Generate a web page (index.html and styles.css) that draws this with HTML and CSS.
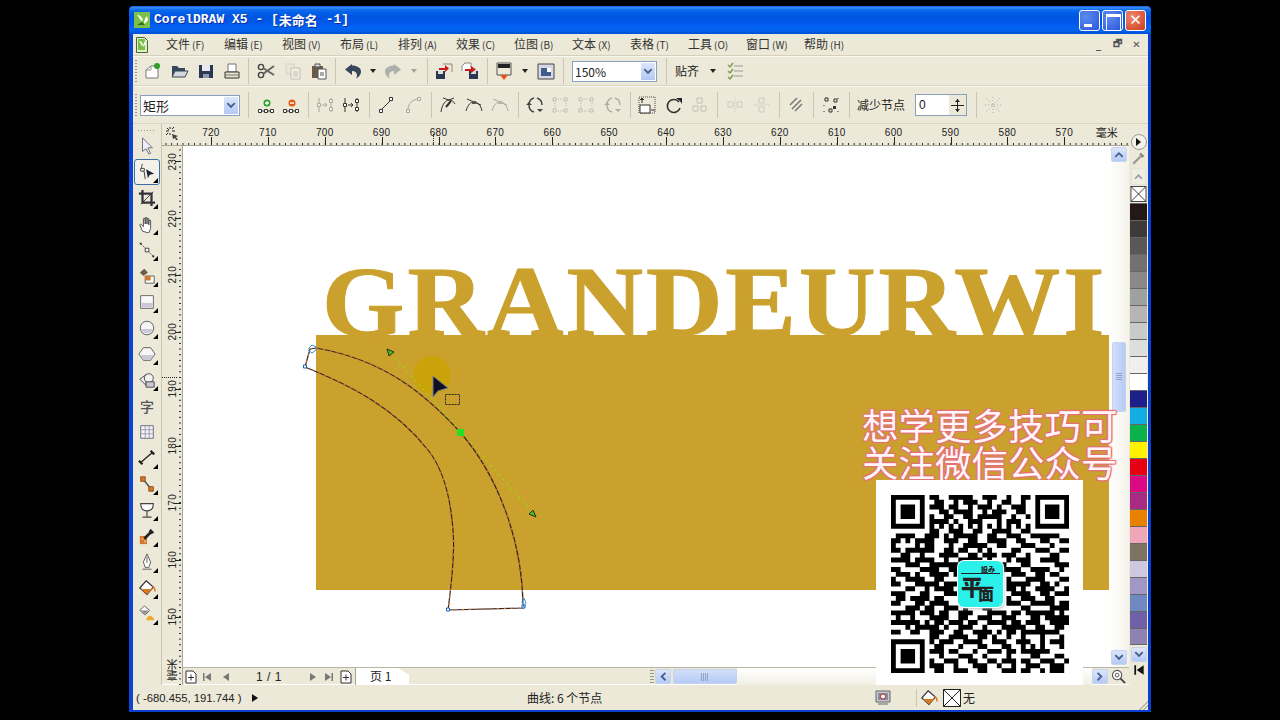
FILE: index.html
```html
<!DOCTYPE html>
<html lang="zh">
<head>
<meta charset="utf-8">
<title>CorelDRAW X5</title>
<link rel="stylesheet" href="styles.css">
</head>
<body>
<svg class="sprite">
<symbol id="logo" viewBox="0 0 16 16"><path d="M0 0h16v16H0z" fill="#7cc04a"/><path d="M3 3c3 0 5 2 6 5l-2 1C6 7 5 5 3 3zM13 4c-2 2-3 5-3 8 2-1 3-3 4-4z" fill="#fff"/><path d="M3 13l5-3 3 3z" fill="#2f6b1e"/></symbol>
<symbol id="doc" viewBox="0 0 12 16"><path d="M.5.500h8l3 3v12H.5z" fill="#dff0c8" stroke="#4a6a30"/><path d="M2 2h7v11H2z" fill="#7cc04a"/><path d="M3 4c2 0 3 1 4 4l-1 1C5 7 4 5 3 4zM9 4C8 6 7 8 7 10c1-1 2-2 2-3z" fill="#fff"/></symbol>
<symbol id="corner" viewBox="0 0 15 15"><path d="M2 5h3M8 5h3M6 1v2M6 7v2M2 9l2-2M8 3l2-2M3 2l2 2" stroke="#222" stroke-width="1"/><path d="M8 8l6 2-2 1 2 3-2 0-1-2-2 1z" fill="#444"/></symbol>
<symbol id="spinb" viewBox="0 0 17 20"><path d="M2 10.500h13M8.500 4v13" stroke="#222"/><path d="M6 7h5L8.500 4zM6 14h5l-2.500 3z" fill="#222"/></symbol>
<symbol id="new" viewBox="0 0 20 20"><path d="M4 17V9l5-4h7v12z" fill="#fff" stroke="#777"/><path d="M4 9h5V5" fill="none" stroke="#999"/><circle cx="15" cy="5" r="3" fill="#2b9e2b"/></symbol>
<symbol id="open" viewBox="0 0 20 20"><path d="M3 16V5h5l2 2h6v3H7l-4 6z" fill="#38465a"/><path d="M3 16l3-6h13l-3 6z" fill="#d3d6da" stroke="#38465a"/></symbol>
<symbol id="save" viewBox="0 0 20 20"><path d="M3 4h14v13H3z" fill="#2c3852"/><path d="M6 4h8v6H6z" fill="#e8e8f0"/><path d="M7 13h6v4H7z" fill="#8f9ab5"/></symbol>
<symbol id="print" viewBox="0 0 20 20"><path d="M6 3h8v8H6z" fill="#fff" stroke="#777"/><path d="M3 11h14v6H3z" fill="#e9e4cc" stroke="#333"/><path d="M3 14h14" stroke="#777"/></symbol>
<symbol id="cut" viewBox="0 0 20 20"><circle cx="5" cy="6" r="2.6" fill="none" stroke="#444" stroke-width="1.4"/><circle cx="5" cy="14" r="2.6" fill="none" stroke="#444" stroke-width="1.4"/><path d="M7 7l11 7M7 13l11-8" stroke="#666" stroke-width="2"/></symbol>
<symbol id="copy" viewBox="0 0 20 20"><path d="M3 3h8v10H3z" fill="#e4e4dc" stroke="#aaa"/><path d="M8 7h9v11H8z" fill="#fff" stroke="#777"/><path d="M10 11h5M10 13h5M10 15h5" stroke="#777"/></symbol>
<symbol id="paste" viewBox="0 0 20 20"><path d="M3 5h11v12H3z" fill="#6b5a45"/><path d="M6 3h5v3H6z" fill="#ddd" stroke="#555"/><path d="M9 8h8v10H9z" fill="#fff" stroke="#555"/><path d="M11 12h4M11 14h4" stroke="#555"/></symbol>
<symbol id="undo" viewBox="0 0 20 20"><path d="M9 3L2 8.500l7 5.500v-4c3 0 5 1.500 5 4.500 0 1-.5 2-1 3 3-1.500 5-4 5-7 0-3.500-4-6-9-6z" fill="#38465a"/></symbol>
<symbol id="imp" viewBox="0 0 20 20"><path d="M2 10h9v8H2z" fill="#2c3852"/><path d="M4 10h5v3H4z" fill="#ddd"/><path d="M9 3h9v8" fill="none" stroke="#888"/><path d="M7 9h6V6l4 3.500-4 3.500v-2H7z" fill="#d01818" transform="translate(-2 -2)"/></symbol>
<symbol id="exp" viewBox="0 0 20 20"><path d="M9 10h9v8H9z" fill="#2c3852"/><path d="M11 10h5v3h-5z" fill="#ddd"/><path d="M2 10V5l3-3h6v5" fill="#fff" stroke="#888"/><path d="M5 8h6V5l5 3.500-5 3.500v-2H5z" fill="#d01818"/></symbol>
<symbol id="pub" viewBox="0 0 20 20"><path d="M3 2h14v12H3z" fill="#ece9d8" stroke="#555"/><path d="M4 3h12v4H4z" fill="#222"/><path d="M6 14h8l-4 5z" fill="#e8501a"/></symbol>
<symbol id="launch" viewBox="0 0 20 20"><path d="M2 3h16v15H2z" fill="#d8d8e4" stroke="#444"/><path d="M5 7h10v8H5z" fill="#3f5c8c"/><path d="M11 7h4v4h-4z" fill="#fff"/></symbol>
<symbol id="snap" viewBox="0 0 20 20"><path d="M3 4l2 2 3-4M3 10l2 2 3-4M3 16l2 2 3-4" fill="none" stroke="#7a9a50" stroke-width="1.400"/><path d="M9 5h9M9 10h9M9 15h9" stroke="#999"/></symbol>
<symbol id="nadd" viewBox="0 0 20 20"><path d="M2.500 14.500h3v3h-3zM8.500 14.500h3v3h-3zM14.500 14.500h3v3h-3z" fill="#fff" stroke="#333"/><path d="M5.500 16h3M11.500 16h3" stroke="#333"/><circle cx="11" cy="8" r="3.500" fill="#2aa02a"/><path d="M9 8h4M11 6v4" stroke="#fff" stroke-width="1.300"/></symbol>
<symbol id="ndel" viewBox="0 0 20 20"><path d="M2.500 14.500h3v3h-3zM8.500 14.500h3v3h-3zM14.500 14.500h3v3h-3z" fill="#fff" stroke="#333"/><path d="M5.500 16h3M11.500 16h3" stroke="#333"/><circle cx="11" cy="8" r="3.500" fill="#e05a10"/><path d="M9 8h4" stroke="#fff" stroke-width="1.400"/></symbol>
<symbol id="join" viewBox="0 0 20 20"><path d="M4 3v14M16 3v14" stroke="#333"/><path d="M2.500 8.500h3v3h-3z" fill="#fff" stroke="#333"/><path d="M14.500 4.500h3v3h-3zM14.500 12.500h3v3h-3z" fill="#fff" stroke="#333"/><path d="M7 10h5M10 8l2 2-2 2" fill="none" stroke="#333"/></symbol>
<symbol id="line" viewBox="0 0 20 20"><path d="M5 15L15 5" stroke="#333"/><path d="M3.500 14.500h3v3h-3zM13.500 2.500h3v3h-3z" fill="#fff" stroke="#333"/></symbol>
<symbol id="curve" viewBox="0 0 20 20"><path d="M5 15C5 8 9 5 15 4" fill="none" stroke="#333"/><path d="M3.500 14.500h3v3h-3zM14.500 2.500h3v3h-3z" fill="#fff" stroke="#333"/></symbol>
<symbol id="cusp" viewBox="0 0 20 20"><path d="M3 17C4 9 8 5 11 5c3 0 5 2 6 4M11 5L5 3M11 5l5-2" fill="none" stroke="#333"/><path d="M8 12l5-6" stroke="#333" stroke-width="2"/></symbol>
<symbol id="smooth" viewBox="0 0 20 20"><path d="M2 16C4 9 7 7 10 7s7 3 8 9M3 4l14 6" fill="none" stroke="#333"/><path d="M8 6h4v3H8z" fill="#555"/></symbol>
<symbol id="rev" viewBox="0 0 20 20"><path d="M9 3C5 4 4 8 4 10s1 6 5 7M12 3c3 1 5 4 5 7" fill="none" stroke="#444" stroke-width="1.500"/><path d="M1 10l3-3 3 3M8 10H3M12 14h6l-3 3z" fill="#444"/></symbol>
<symbol id="ext" viewBox="0 0 20 20"><path d="M3 3h3v3H3zM14 14h3v3h-3zM14 3h3v3h-3zM3 14h3v3H3z" fill="#fff" stroke="#666"/><path d="M5 8v5M8 16h5M8 4h4M16 8v4" stroke="#666" stroke-dasharray="1 1"/></symbol>
<symbol id="stretch" viewBox="0 0 20 20"><path d="M2 2h16v16H2z" fill="none" stroke="#444" stroke-dasharray="1 1"/><path d="M3 10h10v8H3z" fill="#fff" stroke="#333"/><path d="M5 3v5M3 5l2-2 2 2M14 15h4" stroke="#333"/></symbol>
<symbol id="rot" viewBox="0 0 20 20"><path d="M15 7a6.500 6.500 0 1 0 1 6" fill="none" stroke="#333" stroke-width="1.600"/><path d="M12 3h6v6l-2-3z" fill="#222"/></symbol>
<symbol id="aln" viewBox="0 0 20 20"><path d="M7 3h5v5H7zM3 11h5v5H3zM11 11h5v5h-5z" fill="none" stroke="#777"/></symbol>
<symbol id="mx" viewBox="0 0 20 20"><path d="M10 2v16" stroke="#888" stroke-dasharray="1 1"/><path d="M3 7h5v5H3zM12 7h5v5h-5z" fill="none" stroke="#999"/></symbol>
<symbol id="my" viewBox="0 0 20 20"><path d="M2 10h16" stroke="#888" stroke-dasharray="1 1"/><path d="M7 3h5v5H7zM7 12h5v5H7z" fill="none" stroke="#999"/></symbol>
<symbol id="ell" viewBox="0 0 20 20"><path d="M4 10L11 3M6 14l9-9M9 16l7-7" stroke="#777" stroke-width="1.500"/></symbol>
<symbol id="sel" viewBox="0 0 20 20"><path d="M4 3h3v3H4zM13 4h3v3h-3zM8 14h3v3H8z" fill="none" stroke="#333"/><path d="M12 11h3v3h-3z" fill="#333"/><path d="M3 10v1M3 16v1M17 3v1M17 16v1" stroke="#333"/></symbol>
<symbol id="grid" viewBox="0 0 20 20"><path d="M3 3l14 14M17 3L3 17M10 2v16M2 10h16" stroke="#aaa" stroke-dasharray="1 2"/></symbol>
<symbol id="pick" viewBox="0 0 20 20"><path d="M5 1v15l4-3 3 6 2-1-3-6h5z" fill="#eef" stroke="#667"/></symbol>
<symbol id="shape" viewBox="0 0 20 20"><path d="M5 1c-2 4-1 8 2 9l1 8" fill="none" stroke="#333"/><path d="M3 6h4v3H3z" fill="#fff" stroke="#333"/><path d="M9 7l9 5-5 1-2 4z" fill="#1a2438"/></symbol>
<symbol id="crop" viewBox="0 0 20 20"><path d="M5 1v14h14M1 5h14v14" fill="none" stroke="#33333a" stroke-width="2.500"/><path d="M3 17L17 3" stroke="#33333a"/></symbol>
<symbol id="hand" viewBox="0 0 20 20"><path d="M5 18L2 11l1-1 3 3V4h2v6-7h2v7-6h2v7-5h2v9l-2 5z" fill="#fff" stroke="#444"/></symbol>
<symbol id="conn" viewBox="0 0 20 20"><path d="M3 3l14 14" stroke="#444" stroke-dasharray="2 1"/><path d="M8 8h4v4H8z" fill="#fff" stroke="#333"/><path d="M2 2h2v2H2zM16 16h2v2h-2z" fill="#222"/></symbol>
<symbol id="sfill" viewBox="0 0 20 20"><path d="M2 6l5-4 4 4-5 4z" fill="#6d5e44"/><path d="M8 10h10v8H8z" fill="#fff" stroke="#555"/><path d="M8 10h6v5H8z" fill="#d07a2a"/></symbol>
<symbol id="rect" viewBox="0 0 20 20"><path d="M3 3h14v14H3z" fill="#fff" stroke="#555"/><path d="M4 4h12v7H4z" fill="#f8f8f8"/><path d="M4 11h12v5H4z" fill="#c9c9d6"/></symbol>
<symbol id="oval" viewBox="0 0 20 20"><circle cx="10" cy="10" r="7.500" fill="#f6f6f6" stroke="#555"/><path d="M3 11a7.500 7 0 0 0 14 0z" fill="#c9c9d6"/></symbol>
<symbol id="poly" viewBox="0 0 20 20"><path d="M6 3h8l5 7-5 7H6l-5-7z" fill="#f6f6f6" stroke="#555"/><path d="M2 11h16l-4 5.500H6z" fill="#c9c9d6"/></symbol>
<symbol id="basic" viewBox="0 0 20 20"><path d="M2 9l7-5v12z" fill="#eee" stroke="#444"/><circle cx="12" cy="8" r="5" fill="#f4f4f4" stroke="#444"/><path d="M9 12h9v6H9z" fill="#c9c9d6" stroke="#444"/></symbol>
<symbol id="table" viewBox="0 0 20 20"><path d="M3 3h14v14H3z" fill="#f2f2f8" stroke="#667"/><path d="M3 7.500h14M3 12h14M8 3v14M12.500 3v14" stroke="#99a"/></symbol>
<symbol id="dim" viewBox="0 0 20 20"><path d="M3 15L16 4" stroke="#222" stroke-width="1.500"/><path d="M1 13l4 4M14 2l4 4" stroke="#222" stroke-width="2.500"/></symbol>
<symbol id="wire" viewBox="0 0 20 20"><path d="M6 5l8 10" stroke="#444" stroke-width="1.400"/><path d="M3 2h5v5H3z" fill="#d6782a" stroke="#8a4a10"/><path d="M12 13h5v5h-5z" fill="#d6782a" stroke="#8a4a10"/></symbol>
<symbol id="glass" viewBox="0 0 20 20"><path d="M3 3h14c0 6-3 8-7 8s-7-2-7-8zM10 11v6M5 18h10" fill="#fff" stroke="#444" stroke-width="1.300"/></symbol>
<symbol id="drop" viewBox="0 0 20 20"><path d="M2 10h8v9H2z" fill="#d6782a"/><path d="M4 12h2v2H4zM7 15h2v2H7z" fill="#f0c090"/><path d="M7 13l8-8" stroke="#222" stroke-width="3"/><path d="M14 2l4 4-3 2-3-3z" fill="#222"/></symbol>
<symbol id="dropg" viewBox="0 0 20 20"><path d="M3 17l10-10" stroke="#999" stroke-width="3"/><path d="M13 2l5 5-3 2-4-4z" fill="#888"/></symbol>
<symbol id="pen" viewBox="0 0 20 20"><path d="M10 1l4 9-2 6H8l-2-6z" fill="#fff" stroke="#555"/><path d="M10 4v7M5 18h10" stroke="#555"/></symbol>
<symbol id="fill" viewBox="0 0 20 20"><path d="M9 2l8 7-7 8-8-7z" fill="#fff" stroke="#333" stroke-width="1.300"/><path d="M3 11h13l-6 6z" fill="#d87820"/><path d="M16 8c2 1 3 3 3 6" fill="none" stroke="#d87820" stroke-width="1.500"/></symbol>
<symbol id="ifill" viewBox="0 0 20 20"><path d="M7 1l6 5-5 5-6-5z" fill="#fff" stroke="#555"/><path d="M3 6h9l-4 4z" fill="#888"/><path d="M9 17c1-4 3-5 4-5s4 1 5 5z" fill="#f0a828"/></symbol>
<symbol id="up" viewBox="0 0 16 16"><path d="M3 10l5-5 5 5-1.500 1.500L8 8l-3.500 3.500z" fill="#4a5f8c"/></symbol>
<symbol id="down" viewBox="0 0 16 16"><path d="M3 6l5 5 5-5-1.500-1.500L8 8 4.500 4.500z" fill="#4a5f8c"/></symbol>
<symbol id="left" viewBox="0 0 16 16"><path d="M10 3L5 8l5 5 1.500-1.500L8 8l3.500-3.500z" fill="#4a5f8c"/></symbol>
<symbol id="right" viewBox="0 0 16 16"><path d="M6 3l5 5-5 5-1.500-1.500L8 8 4.500 4.500z" fill="#4a5f8c"/></symbol>
<symbol id="zoom" viewBox="0 0 16 16"><circle cx="6.500" cy="6.500" r="5" fill="#fff" stroke="#555" stroke-width="1.200"/><circle cx="6.500" cy="6.500" r="2" fill="none" stroke="#555"/><path d="M10 10l5 5" stroke="#444" stroke-width="2"/></symbol>
<symbol id="padd" viewBox="0 0 12 14"><path d="M1 1h7l3 3v9H1z" fill="#fff" stroke="#333"/><path d="M3 7.500h6M6 4.500v6" stroke="#333"/></symbol>
<symbol id="first" viewBox="0 0 12 12"><path d="M2 2h1.500v8H2zM10 2v8L4 6z" fill="#777"/></symbol>
<symbol id="firstd" viewBox="0 0 12 12"><path d="M2 2h1.500v8H2zM10 2v8L4 6z" fill="#111"/></symbol>
<symbol id="prev" viewBox="0 0 12 12"><path d="M9 2v8L3 6z" fill="#777"/></symbol>
<symbol id="next" viewBox="0 0 12 12"><path d="M3 2v8l6-4z" fill="#777"/></symbol>
<symbol id="last" viewBox="0 0 12 12"><path d="M8.500 2H10v8H8.500zM2 2v8l6-4z" fill="#777"/></symbol>
<symbol id="nofill" viewBox="0 0 18 18"><path d="M.5.500h17v17H.5z" fill="#fff" stroke="#222"/><path d="M.5.500l17 17M17.500.500l-17 17" stroke="#222"/></symbol>
<symbol id="colorp" viewBox="0 0 16 16"><path d="M1 1h14v11H1z" fill="#c8c8d4" stroke="#666"/><path d="M3 3h10v7H3z" fill="#8a8a9c"/><circle cx="8" cy="6.500" r="2.500" fill="#fff" stroke="#a33"/><path d="M3 14h10" stroke="#666"/></symbol>
</svg>

<div class="window">
  <header class="titlebar">
    <svg class="app-ic"><use href="#logo"/></svg>
    <span class="title"><span class="latin">CorelDRAW X5 - [</span><span>未命名</span><span class="latin"> -1]</span></span>
    <span class="caps"><span class="cap min"></span><span class="cap max"></span><span class="cap close"></span></span>
  </header>

  <nav class="menubar">
    <svg class="doc-ic"><use href="#doc"/></svg>
    <span class="mi">文件<small>(F)</small></span><span class="mi">编辑<small>(E)</small></span><span class="mi">视图<small>(V)</small></span><span class="mi">布局<small>(L)</small></span><span class="mi">排列<small>(A)</small></span><span class="mi">效果<small>(C)</small></span><span class="mi">位图<small>(B)</small></span><span class="mi">文本<small>(X)</small></span><span class="mi">表格<small>(T)</small></span><span class="mi">工具<small>(O)</small></span><span class="mi">窗口<small>(W)</small></span><span class="mi">帮助<small>(H)</small></span>
    <span class="mdi"><span class="mdi-b">_</span><span class="mdi-b">🗗</span><span class="mdi-b">✕</span></span>
  </nav>

  <div class="tb tb1">
    <span class="grip"></span>
    <span class="c w27"><svg class="ic"><use href="#new"/></svg></span>
    <span class="c w27"><svg class="ic"><use href="#open"/></svg></span>
    <span class="c w27"><svg class="ic"><use href="#save"/></svg></span>
    <span class="c w25"><svg class="ic"><use href="#print"/></svg></span>
    <span class="s w8"></span>
    <span class="c w27"><svg class="ic"><use href="#cut"/></svg></span>
    <span class="c w27 off"><svg class="ic"><use href="#copy"/></svg></span>
    <span class="c w25"><svg class="ic"><use href="#paste"/></svg></span>
    <span class="s w8"></span>
    <span class="c w27"><svg class="ic"><use href="#undo"/></svg></span>
    <span class="c w14"><i class="dd"></i></span>
    <span class="c w26 off"><svg class="ic flip"><use href="#undo"/></svg></span>
    <span class="c w16 off"><i class="dd"></i></span>
    <span class="s w9"></span>
    <span class="c w25"><svg class="ic"><use href="#imp"/></svg></span>
    <span class="c w27"><svg class="ic"><use href="#exp"/></svg></span>
    <span class="s w8"></span>
    <span class="c w26"><svg class="ic"><use href="#pub"/></svg></span>
    <span class="c w16"><i class="dd"></i></span>
    <span class="c w25"><svg class="ic"><use href="#launch"/></svg></span>
    <span class="s w10"></span>
    <span class="combo zoomcombo"><span class="combo-t">150%</span><span class="combo-b"><svg class="chev"><use href="#down"/></svg></span></span>
    <span class="s w18"></span>
    <span class="lbl snap-l">贴齐</span>
    <span class="c w24"><i class="dd"></i></span>
    <span class="c w20"><svg class="ic"><use href="#snap"/></svg></span>
  </div>

  <div class="tb tb2">
    <span class="grip"></span>
    <span class="combo shapecombo"><span class="combo-t">矩形</span><span class="combo-b"><svg class="chev"><use href="#down"/></svg></span></span>
    <span class="s w16"></span>
    <span class="c w20"><svg class="ic"><use href="#nadd"/></svg></span>
    <span class="c w30"><svg class="ic"><use href="#ndel"/></svg></span>
    <span class="s w4"></span>
    <span class="c w30 off"><svg class="ic"><use href="#join"/></svg></span>
    <span class="c w22"><svg class="ic"><use href="#join"/></svg></span>
    <span class="s w14"></span>
    <span class="c w20"><svg class="ic"><use href="#line"/></svg></span>
    <span class="c w34 off"><svg class="ic"><use href="#curve"/></svg></span>
    <span class="s w2"></span>
    <span class="c w32"><svg class="ic"><use href="#cusp"/></svg></span>
    <span class="c w20"><svg class="ic"><use href="#smooth"/></svg></span>
    <span class="c w32 off"><svg class="ic"><use href="#smooth"/></svg></span>
    <span class="s w4"></span>
    <span class="c w30"><svg class="ic"><use href="#rev"/></svg></span>
    <span class="c w20 off"><svg class="ic"><use href="#ext"/></svg></span>
    <span class="c w32 off"><svg class="ic"><use href="#ext"/></svg></span>
    <span class="c w22 off"><svg class="ic"><use href="#rev"/></svg></span>
    <span class="s w12"></span>
    <span class="c w22"><svg class="ic"><use href="#stretch"/></svg></span>
    <span class="c w32"><svg class="ic"><use href="#rot"/></svg></span>
    <span class="c w20 off"><svg class="ic"><use href="#aln"/></svg></span>
    <span class="s w14"></span>
    <span class="c w22 off"><svg class="ic"><use href="#mx"/></svg></span>
    <span class="c w32 off"><svg class="ic"><use href="#my"/></svg></span>
    <span class="s w2"></span>
    <span class="c w32"><svg class="ic"><use href="#ell"/></svg></span>
    <span class="s w2"></span>
    <span class="c w34"><svg class="ic"><use href="#sel"/></svg></span>
    <span class="s w2"></span>
    <span class="lbl reduce">减少节点</span>
    <span class="spin"><span class="spin-v">0</span><span class="spin-b"><svg class="spin-i"><use href="#spinb"/></svg></span></span>
    <span class="s w18"></span>
    <span class="c w16"><svg class="ic"><use href="#grid"/></svg></span>
  </div>

  <div class="workspace">
    <aside class="toolbox">
      <span class="t"><svg class="ic"><use href="#pick"/></svg></span>
      <span class="t tf active"><svg class="ic"><use href="#shape"/></svg></span>
      <span class="t tf"><svg class="ic"><use href="#crop"/></svg></span>
      <span class="t tf"><svg class="ic"><use href="#hand"/></svg></span>
      <span class="t tf"><svg class="ic"><use href="#conn"/></svg></span>
      <span class="t tf"><svg class="ic"><use href="#sfill"/></svg></span>
      <span class="t tf"><svg class="ic"><use href="#rect"/></svg></span>
      <span class="t tf"><svg class="ic"><use href="#oval"/></svg></span>
      <span class="t tf"><svg class="ic"><use href="#poly"/></svg></span>
      <span class="t tf"><svg class="ic"><use href="#basic"/></svg></span>
      <span class="t zi">字</span>
      <span class="t"><svg class="ic"><use href="#table"/></svg></span>
      <span class="t tf"><svg class="ic"><use href="#dim"/></svg></span>
      <span class="t tf"><svg class="ic"><use href="#wire"/></svg></span>
      <span class="t tf"><svg class="ic"><use href="#glass"/></svg></span>
      <span class="t tf"><svg class="ic"><use href="#drop"/></svg></span>
      <span class="t tf"><svg class="ic"><use href="#pen"/></svg></span>
      <span class="t tf"><svg class="ic"><use href="#fill"/></svg></span>
      <span class="t tf"><svg class="ic"><use href="#ifill"/></svg></span>
    </aside>

    <div class="center">
      <div class="hruler">
        <span class="rn">720</span><span class="rn">710</span><span class="rn">700</span><span class="rn">690</span><span class="rn">680</span><span class="rn">670</span><span class="rn">660</span><span class="rn">650</span><span class="rn">640</span><span class="rn">630</span><span class="rn">620</span><span class="rn">610</span><span class="rn">600</span><span class="rn">590</span><span class="rn">580</span><span class="rn">570</span>
        <span class="unit">毫米</span>
        <span class="corner"><svg class="corner-i"><use href="#corner"/></svg></span>
        <i class="hmark"></i>
      </div>
      <div class="vruler">
        <div class="vcol">
          <span class="vn"><b>230</b></span><span class="vn"><b>220</b></span><span class="vn"><b>210</b></span><span class="vn"><b>200</b></span><span class="vn"><b>190</b></span><span class="vn"><b>180</b></span><span class="vn"><b>170</b></span><span class="vn"><b>160</b></span><span class="vn"><b>150</b></span><span class="vn vu"><b>毫米</b></span>
        </div>
        <i class="vmark"></i>
      </div>

      <main class="canvas">
        <div class="goldrect"></div>
        <div class="goldtext">GRANDEURWI</div>
        <div class="halo"></div>
        <svg class="art" viewBox="183 146 926 521">
          <path class="ctrl" d="M391 353L535 515"/>
          <path class="shp" d="M316 348C385 360 425 394 460 432C500 478 523 545 523 608L448 610C452 580 455 550 453 530C450 490 440 465 428 450C395 408 350 385 305 367L310 349Z"/>
          <path class="shp2" d="M316 348C385 360 425 394 460 432C500 478 523 545 523 608L448 610C452 580 455 550 453 530C450 490 440 465 428 450C395 408 350 385 305 367L310 349Z"/>
          <path class="hnd" d="M387 349l7 3-5 4zM533 510l3 7-7-3z"/>
          <rect class="sqg" x="457" y="429" width="7" height="7"/>
          <path class="nod" d="M303.500 365h3v3h-3zM446.500 608h3v3h-3zM522 605h3v3h-3z"/>
          <path class="arrowh" d="M309 348l3-3 4 2 0 3-4 3-3-2zM522 602l2-4 2 5-2 4z"/>
          <path class="cursor" d="M433 376v21l5-6 10-3z"/>
          <rect class="mq" x="445.500" y="394.500" width="14" height="10"/>
        </svg>
      </main>

      <div class="vscroll">
        <span class="sb"><svg class="chev"><use href="#up"/></svg></span>
        <span class="vthumb"><i class="hatch"></i></span>
        <span class="sb"><svg class="chev"><use href="#down"/></svg></span>
      </div>

      <div class="pagebar">
        <span class="pg first"><svg class="pgi"><use href="#padd"/></svg></span>
        <span class="pg"><svg class="pgi"><use href="#first"/></svg></span>
        <span class="pg"><svg class="pgi"><use href="#prev"/></svg></span>
        <span class="pagenum">1 / 1</span>
        <span class="pg"><svg class="pgi"><use href="#next"/></svg></span>
        <span class="pg"><svg class="pgi"><use href="#last"/></svg></span>
        <span class="pg"><svg class="pgi"><use href="#padd"/></svg></span>
        <span class="tab">页 1</span>
        <span class="tabrest"></span>
        <span class="hgrip"></span>
        <span class="sb"><svg class="chev"><use href="#left"/></svg></span>
        <span class="hthumb"><i class="hatch h"></i></span>
        <span class="htrack"></span>
        <span class="sb"><svg class="chev"><use href="#right"/></svg></span>
        <span class="zm"><svg class="chev"><use href="#zoom"/></svg></span>
      </div>
    </div>

    <aside class="palette">
      <span class="pal-fly"><i></i></span>
      <span class="pal-drop"><svg class="chev"><use href="#dropg"/></svg></span>
      <span class="pal-up"><svg class="chev"><use href="#up"/></svg></span>
      <span class="sw-x"><svg class="swx"><use href="#nofill"/></svg></span>
      <span class="sw c01"></span><span class="sw c02"></span><span class="sw c03"></span><span class="sw c04"></span><span class="sw c05"></span><span class="sw c06"></span><span class="sw c07"></span><span class="sw c08"></span><span class="sw c09"></span><span class="sw c10"></span><span class="sw c11"></span><span class="sw c12"></span><span class="sw c13"></span><span class="sw c14"></span><span class="sw c15"></span><span class="sw c16"></span><span class="sw c17"></span><span class="sw c18"></span><span class="sw c19"></span><span class="sw c20"></span><span class="sw c21"></span><span class="sw c22"></span><span class="sw c23"></span><span class="sw c24"></span><span class="sw c25"></span><span class="sw c26"></span>
      <span class="sb pal-down"><svg class="chev"><use href="#down"/></svg></span>
      <span class="pal-end"><svg class="chev"><use href="#firstd"/></svg></span>
    </aside>
  </div>

  <footer class="status">
    <span class="coords">( -680.455, 191.744 )</span>
    <i class="tri"></i>
    <span class="nodes">曲线: 6 个节点</span>
    <svg class="st-ic"><use href="#colorp"/></svg>
    <i class="st-sep"></i>
    <svg class="st-fill"><use href="#fill"/></svg>
    <svg class="st-x"><use href="#nofill"/></svg>
    <span class="st-none">无</span>
    <i class="resize"></i>
  </footer>

  <div class="watermark">想学更多技巧可<br>关注微信公众号</div>
  <div class="qrpanel">
    <svg class="qr" viewBox="0 0 37 37">
      <path class="qf" fill-rule="evenodd" d="M0 0h7v7H0zM1 1v5h5V1zM2 2h3v3H2zM30 0h7v7h-7zM31 1v5h5V1zM32 2h3v3h-3zM0 30h7v7H0zM1 31v5h5v-5zM2 32h3v3H2z"/>
      <path class="qd" d="M8 .5h2M12 .5h5M19 .5h3M24 .5h1M27 .5h2M9 1.500h2M13 1.500h1M15 1.500h3M20 1.500h1M23 1.500h2M27 1.500h1M8 2.500h3M12 2.500h2M16 2.500h1M18 2.500h3M22 2.500h1M25 2.500h3M10 3.500h2M13 3.500h4M19 3.500h1M21 3.500h3M26 3.500h2M8 4.500h1M11 4.500h2M15 4.500h2M18 4.500h5M25 4.500h1M28 4.500h1M8 5.500h4M13 5.500h1M16 5.500h3M22 5.500h1M24 5.500h3M8 6.500h1M10 6.500h1M12 6.500h1M14 6.500h1M16 6.500h1M18 6.500h1M20 6.500h1M22 6.500h1M24 6.500h1M26 6.500h1M28 6.500h1M8 7.500h2M12 7.500h3M17 7.500h2M21 7.500h4M27 7.500h2M1 8.500h4M7 8.500h3M11 8.500h1M13 8.500h5M20 8.500h2M24 8.500h3M29 8.500h6M0 9.500h2M3 9.500h1M5 9.500h4M11 9.500h3M16 9.500h2M20 9.500h4M26 9.500h2M31 9.500h2M35 9.500h2M0 10.500h1M5 10.500h1M7 10.500h2M12 10.500h1M15 10.500h5M22 10.500h2M27 10.500h3M33 10.500h1M0 11.500h2M3 11.500h6M11 11.500h2M14 11.500h2M18 11.500h1M20 11.500h1M25 11.500h2M30 11.500h3M35 11.500h2M2 12.500h2M6 12.500h1M10 12.500h4M16 12.500h2M19 12.500h3M23 12.500h3M28 12.500h1M33 12.500h2M0 13.500h4M5 13.500h4M11 13.500h1M14 13.500h5M20 13.500h1M24 13.500h1M26 13.500h3M31 13.500h4M3 14.500h3M8 14.500h6M17 14.500h3M22 14.500h2M27 14.500h2M34 14.500h3M0 15.500h2M6 15.500h4M12 15.500h2M15 15.500h2M19 15.500h2M23 15.500h4M29 15.500h4M35 15.500h1M1 16.500h3M5 16.500h1M8 16.500h4M13 16.500h1M25 16.500h3M30 16.500h2M33 16.500h2M0 17.500h1M3 17.500h4M9 17.500h2M24 17.500h1M28 17.500h4M35 17.500h2M0 18.500h2M5 18.500h5M11 18.500h3M24 18.500h5M31 18.500h2M34 18.500h1M3 19.500h2M7 19.500h1M9 19.500h4M24 19.500h2M27 19.500h1M30 19.500h4M36 19.500h1M0 20.500h3M6 20.500h2M11 20.500h3M25 20.500h4M31 20.500h2M34 20.500h3M1 21.500h2M4 21.500h4M9 21.500h2M24 21.500h1M27 21.500h3M32 21.500h2M0 22.500h2M5 22.500h2M8 22.500h4M24 22.500h3M29 22.500h5M35 22.500h2M3 23.500h3M7 23.500h2M11 23.500h3M15 23.500h1M19 23.500h2M27 23.500h2M33 23.500h4M0 24.500h5M6 24.500h3M10 24.500h2M14 24.500h3M20 24.500h4M25 24.500h2M28 24.500h6M35 24.500h1M1 25.500h1M4 25.500h1M8 25.500h4M14 25.500h2M18 25.500h3M23 25.500h3M29 25.500h2M32 25.500h5M0 26.500h6M7 26.500h1M9 26.500h2M12 26.500h3M16 26.500h2M20 26.500h4M25 26.500h2M28 26.500h3M33 26.500h4M3 27.500h1M5 27.500h5M11 27.500h1M14 27.500h3M19 27.500h1M23 27.500h5M30 27.500h2M34 27.500h2M0 28.500h2M4 28.500h2M8 28.500h3M13 28.500h2M17 28.500h4M22 28.500h1M24 28.500h2M27 28.500h8M8 29.500h2M12 29.500h4M18 29.500h2M21 29.500h1M24 29.500h1M27 29.500h1M31 29.500h1M35 29.500h1M8 30.500h1M10 30.500h3M15 30.500h4M21 30.500h3M26 30.500h3M31 30.500h1M33 30.500h3M9 31.500h2M14 31.500h1M18 31.500h2M23 31.500h2M27 31.500h1M29 31.500h1M31 31.500h1M35 31.500h1M8 32.500h3M12 32.500h2M17 32.500h1M20 32.500h3M24 32.500h2M27 32.500h6M10 33.500h1M14 33.500h3M19 33.500h1M24 33.500h1M29 33.500h2M34 33.500h2M8 34.500h1M11 34.500h3M16 34.500h2M20 34.500h2M23 34.500h3M27 34.500h2M31 34.500h3M36 34.500h1M8 35.500h3M13 35.500h1M17 35.500h3M22 35.500h1M25 35.500h1M28 35.500h3M33 35.500h3M9 36.500h2M13 36.500h3M18 36.500h2M23 36.500h3M27 36.500h2M31 36.500h1M33 36.500h3"/>
    </svg>
    <div class="qrlogo"><span class="ql-small">設み</span><span class="ql-a">平</span><span class="ql-b">面</span></div>
  </div>
</div>
</body>
</html>
```
FILE: styles.css
```css
*{box-sizing:border-box}
html,body{margin:0;height:100%;background:#000;overflow:hidden}
body{padding:6px 129px 8px;font-family:"Noto Sans CJK SC","Liberation Sans",sans-serif;color:#222}
.sprite{display:none}
i{font-style:normal;display:block}
svg{display:block}
.window{position:relative;width:1022px;height:706px;background:#ece9d8;display:flex;flex-direction:column;border-left:4px solid #0a45d6;border-right:3px solid #0a3fd0;border-bottom:2px solid #0a3fd0;border-radius:4px 4px 0 0}

.titlebar{height:28px;margin-left:-4px;margin-right:-3px;padding-left:5px;display:flex;align-items:center;background:linear-gradient(#0a55d8 0,#3a90f5 6%,#1470ef 12%,#0360e8 22%,#0054e3 40%,#0058ea 60%,#0264f5 78%,#0260ec 88%,#0050d2 100%);border-radius:5px 5px 0 0}
.app-ic{width:16px;height:16px;flex:none}
.title{margin-left:4px;font-size:13px;line-height:16px;font-weight:700;color:#fff;text-shadow:1px 1px 0 #0f2f9c;white-space:pre;display:flex;align-items:center}
.latin{font-family:"Liberation Mono",monospace;font-size:13px;white-space:pre}
.caps{margin-left:auto;margin-right:5px;display:flex;gap:2px}
.cap{width:21px;height:21px;border:1px solid #fff;border-radius:3px;position:relative;background:radial-gradient(circle at 30% 30%,#5d8cf0,#2a55d8)}
.cap.min::after{content:"";position:absolute;left:4px;bottom:3px;width:8px;height:3px;background:#fff}
.cap.max::after{content:"";position:absolute;left:3px;top:3px;width:13px;height:13px;border:1px solid #fff;border-top-width:3px}
.cap.close{background:radial-gradient(circle at 30% 30%,#ec8a70,#cf3a1a)}
.cap.close::after{content:"✕";position:absolute;inset:0;display:flex;align-items:center;justify-content:center;color:#fff;font:700 15px "DejaVu Sans",sans-serif}

.menubar{height:22px;display:flex;align-items:center;border-bottom:1px solid #d4d0bc;flex:none;padding-left:3px}
.doc-ic{width:12px;height:16px;flex:none;margin-right:18px}
.mi{width:58px;flex:none;font-size:12px;line-height:20px;white-space:nowrap;color:#333}
.mi small{font-size:10px;margin-left:2px}
.mdi{margin-left:auto;display:flex;margin-right:2px}
.mdi-b{width:19px;height:18px;display:flex;align-items:center;justify-content:center;color:#555;font:700 10px "DejaVu Sans",sans-serif}

.tb{display:flex;align-items:center;flex:none;border-bottom:1px solid #d8d5c4;border-top:1px solid #f8f7f0}
.tb1{height:30px}
.tb2{height:38px}
.grip{width:5px;height:22px;flex:none;background:repeating-linear-gradient(#9a9786 0 1px,transparent 1px 3px) 2px 0/2px 100% no-repeat}
.c{flex:none;display:flex;align-items:center;justify-content:center;height:24px}
.s{flex:none;height:26px;position:relative}
.s::before{content:"";position:absolute;left:50%;top:0;bottom:0;width:1px;background:#c9c6b3}
.w2{width:2px}.w4{width:4px}.w8{width:8px}.w9{width:9px}.w10{width:10px}.w12{width:12px}.w14{width:14px}.w16{width:16px}.w18{width:18px}.w20{width:20px}.w22{width:22px}.w24{width:24px}.w25{width:25px}.w26{width:26px}.w27{width:27px}.w30{width:30px}.w32{width:32px}.w34{width:34px}
.ic{width:20px;height:20px;flex:none}
.flip{transform:scaleX(-1)}
.off{opacity:.35}
.dd{width:0;height:0;border:3.500px solid transparent;border-top:4px solid #222;border-bottom:0}

.combo{display:flex;flex:none;height:21px;background:#fff;border:1px solid #8aa0c0;align-items:stretch}
.zoomcombo{width:85px;margin-left:4px}
.shapecombo{width:100px;margin-left:2px}
.combo-t{flex:1;font-size:12px;line-height:19px;padding-left:2px}
.shapecombo .combo-t{font-size:13px}
.combo-b{width:16px;background:linear-gradient(#dbe6fb,#b3c8f4);border:1px solid #fff;display:flex;align-items:center;justify-content:center}
.chev{width:15px;height:15px}
.lbl{font-size:12px;flex:none;line-height:20px}
.snap-l{width:26px}
.reduce{margin-left:7px;width:49px;white-space:nowrap}
.spin{margin-left:9px;width:52px;height:22px;background:#fff;border:1px solid #8aa0b8;display:flex;align-items:stretch;flex:none}
.spin-v{flex:1;font:12px/20px "Liberation Sans",sans-serif;padding-left:3px}
.spin-b{width:17px;background:#ece9d8;display:flex;align-items:center;justify-content:center}
.spin-i{width:17px;height:20px}

.workspace{flex:1;display:flex;min-height:0}
.toolbox{width:29px;flex:none;padding-top:9px;border-right:1px solid #c9c6b3;display:flex;flex-direction:column;position:relative}
.toolbox::before{content:"";position:absolute;left:5px;top:6px;width:18px;height:1px;background:repeating-linear-gradient(90deg,#9a9786 0 1px,transparent 1px 3px)}
.t{height:26px;flex:none;display:flex;align-items:center;justify-content:center;position:relative}
.t .ic{width:18px;height:18px}
.tf::after{content:"";position:absolute;right:3px;bottom:2px;border:0 solid transparent;border-width:0 0 5px 5px;border-bottom-color:#000}
.active{margin:0 1px;border:1px solid #3a6ea5;border-radius:3px;background:#f4f2e8}
.active::after{right:1px;bottom:1px}
.zi{font-size:14px;font-weight:500;color:#555}

.center{flex:1;min-width:0;display:grid;grid-template-columns:21px 926px 20px;grid-template-rows:22px 521px 18px;border-bottom:1px solid #fff}
.hruler{grid-column:1/4;display:flex;position:relative;padding-left:20.500px;overflow:hidden;border-bottom:1px solid #a8a595;background:linear-gradient(90deg,#222 1px,transparent 1px) 3.500px 19px/5.690px 2px repeat-x}
.rn{width:56.900px;flex:none;text-align:center;font:10px/15px "Liberation Sans",sans-serif;padding-top:1px;position:relative;color:#222;letter-spacing:.3px}
.rn::after{content:"";position:absolute;left:50%;top:13px;width:1px;height:8px;background:#222}
.unit{font-size:11px;line-height:15px;white-space:nowrap;margin-left:3px;width:24px;padding-top:1px}
.corner{position:absolute;left:2px;top:2px;width:15px;height:15px;background:#ece9d8}
.corner-i{width:15px;height:15px}
.hmark{position:absolute;left:271px;top:10px;height:11px;width:1px;background:repeating-linear-gradient(#222 0 1px,transparent 1px 2px)}
.vruler{grid-column:1;grid-row:2/4;overflow:hidden;position:relative;border-right:1px solid #a8a595;background:linear-gradient(#222 1px,transparent 1px) 17px 3.500px/2px 5.690px repeat-y}
.vcol{margin-top:-13px;display:flex;flex-direction:column}
.vn{height:56.900px;flex:none;display:flex;align-items:center;justify-content:flex-start;padding-left:6px;position:relative}
.vn b{writing-mode:vertical-rl;transform:rotate(180deg);font:10px/10px "Liberation Sans",sans-serif;letter-spacing:.3px}
.vn::after{content:"";position:absolute;right:1px;top:50%;width:6px;height:1px;background:#222}
.vu{height:30px;margin-top:9px;padding-left:5px}
.vu b{font:11px/11px "Noto Sans CJK SC",sans-serif}
.vu::after{display:none}
.vmark{position:absolute;left:0;top:231px;width:15px;height:1px;background:repeating-linear-gradient(90deg,#222 0 1px,transparent 1px 2px)}

.canvas{grid-column:2;grid-row:2;background:#fff;position:relative;overflow:hidden}
.goldtext{position:absolute;left:139px;top:96px;font:700 99px/120px "Liberation Serif",serif;color:#cba12e;letter-spacing:2.800px;white-space:nowrap;transform:scaleX(1.07);transform-origin:0 50%;-webkit-text-stroke:1px #cba12e}
.goldrect{position:absolute;left:133px;top:189px;right:0;height:255px;background:#cba12e}
.halo{position:absolute;left:230px;top:210px;width:38px;height:38px;border-radius:50%;background:#c9a309}
.art{position:absolute;left:0;top:0;width:926px;height:521px}
.ctrl{fill:none;stroke:#8fe000;stroke-width:1.300;stroke-dasharray:2 4}
.shp{fill:none;stroke:#3b2420;stroke-width:1.200}
.shp2{fill:none;stroke:#c67d3c;stroke-width:1.200;stroke-dasharray:2 5}
.hnd{fill:#55b030;stroke:#1d3a10}
.sqg{fill:#22e022}
.nod{fill:#fff;stroke:#1a5fb0}
.arrowh{fill:none;stroke:#3a8ed8}
.cursor{fill:#101020;stroke:#7a7f90}
.mq{fill:none;stroke:#222;stroke-dasharray:2 1}

.vscroll{grid-column:3;grid-row:2;display:flex;flex-direction:column;align-items:center;padding:1px 2px 2px 1px;background:linear-gradient(90deg,#fff,#f4f2e9)}
.sb{width:16px;height:15px;flex:none;display:flex;align-items:center;justify-content:center;border:1px solid #c8d4ee;border-radius:2px;background:linear-gradient(#dce7fb,#b5caf5)}
.vthumb{width:14px;height:70px;margin:180px 0 auto;flex:none;border:1px solid #c5d3f0;border-radius:2px;background:linear-gradient(90deg,#d2def9,#b7cbf5);display:flex;align-items:center;justify-content:center}
.hatch{width:6px;height:8px;background:repeating-linear-gradient(#8ea2cc 0 1px,transparent 1px 2px)}
.hatch.h{width:8px;height:8px;background:repeating-linear-gradient(90deg,#8ea2cc 0 1px,transparent 1px 2px)}

.pagebar{grid-column:2/4;grid-row:3;display:flex;align-items:center;border-top:1px solid #b8b5a5}
.pg{width:17px;flex:none;display:flex;justify-content:center}
.pg.first{margin-left:-1px}
.pg:nth-child(2){margin-left:-1px}
.pg:nth-child(3){margin-left:2px}
.pg:nth-child(6){margin-left:-1px}
.pgi{width:12px;height:14px}
.pagenum{width:70px;flex:none;font:12px/16px "Liberation Sans",sans-serif;text-align:center;letter-spacing:.5px;color:#222}
.tab{margin-left:1px;width:54px;height:17px;flex:none;background:#fff;font:12px/15px "Noto Sans CJK SC",sans-serif;padding-left:14px;clip-path:polygon(0 0,80% 0,100% 40%,100% 100%,0 100%);border-left:1px solid #a8a595}
.tabrest{flex:1;align-self:stretch}
.hgrip{width:4px;height:14px;margin-right:1px;background:repeating-linear-gradient(#9a9786 0 1px,transparent 1px 3px)}
.hthumb{width:64px;height:15px;margin-left:2px;flex:none;border:1px solid #c5d3f0;border-radius:2px;background:linear-gradient(#d2def9,#b7cbf5);display:flex;align-items:center;justify-content:center}
.htrack{width:355px;height:17px;flex:none;background:linear-gradient(#fff,#f1efe4)}
.zm{width:21px;flex:none;display:flex;justify-content:center}

.palette{width:19px;flex:none;display:flex;flex-direction:column;align-items:center;position:relative}
.pal-fly{margin-top:10px;width:16px;height:16px;border-radius:50%;border:1px solid #999;background:#f4f3ea;display:flex;align-items:center;justify-content:center;flex:none}
.pal-fly i{border:4px solid transparent;border-left:5px solid #111;border-right:0}
.pal-drop{height:17px;margin-top:1px;flex:none}
.pal-up{margin-top:0;width:15px;height:17px;background:#f4f3ea;border:1px solid #ddd;display:flex;align-items:center;justify-content:center;flex:none;opacity:.55}
.sw-x{width:17px;height:16px;flex:none;margin-top:1px;background:#fff}
.swx{width:17px;height:16px}
.sw{width:17px;height:17px;flex:none;border-top:1px solid #666}
.sw-x + .sw{margin-top:1px}
.c01{background:#231815}.c02{background:#3e3a39}.c03{background:#595757}.c04{background:#727171}.c05{background:#898989}.c06{background:#9fa0a0}.c07{background:#b5b5b6}.c08{background:#c9caca}.c09{background:#dcdddd}.c10{background:#efefef}.c11{background:#fff}.c12{background:#1d2088}.c13{background:#12aee3}.c14{background:#0cb14b}.c15{background:#fff100}.c16{background:#e60012}.c17{background:#dc0a82}.c18{background:#a72a83}.c19{background:#e88100}.c20{background:#efa6b6}.c21{background:#7d7263}.c22{background:#cdc8e0}.c23{background:#a097c5}.c24{background:#7089c0}.c25{background:#7060a8}.c26{background:#8e82b0;border-bottom:1px solid #666}
.pal-down{margin-top:2px}
.pal-end{margin-top:1px;height:14px}
.pal-end .chev{width:14px;height:14px}

.status{height:25px;flex:none;display:flex;align-items:center;position:relative;font:12px/16px "Liberation Sans",sans-serif;color:#222}
.coords{margin-left:3px;width:110px;white-space:nowrap;font-size:11.300px}
.tri{margin-left:6px;border:4.500px solid transparent;border-left:6px solid #111;border-right:0}
.nodes{margin-left:269px;width:80px;white-space:nowrap;font-family:"Noto Sans CJK SC",sans-serif}
.st-ic{width:16px;height:16px;margin-left:268px}
.st-sep{width:1px;height:18px;margin-left:25px;background:#c9c6b3}
.st-fill{width:18px;height:18px;margin-left:3px}
.st-x{width:18px;height:18px;margin-left:5px}
.st-none{margin-left:2px;font:12px/16px "Noto Sans CJK SC",sans-serif}
.resize{position:absolute;right:0;bottom:0;width:11px;height:11px;background:repeating-linear-gradient(135deg,#b8b5a5 0 1px,transparent 1px 3px);clip-path:polygon(100% 0,100% 100%,0 100%)}

.watermark{position:absolute;left:729px;top:401px;font:400 36.500px/36.500px "Noto Sans CJK SC",sans-serif;white-space:nowrap;color:#fff6f5;text-shadow:0 0 1px #e4707c,0 0 2px #e4707c,1px 1px 1px #e4707c,-1px -1px 1px #e4707c,1px -1px 1px #e4707c,-1px 1px 1px #e4707c}
.qrpanel{position:absolute;left:743px;top:474px;width:207px;height:205px;background:#fff}
.qr{position:absolute;left:14px;top:15px;width:180px;height:178px}
.qf{fill:#000}
.qd{fill:none;stroke:#000;stroke-width:1.020}
.qrlogo{position:absolute;left:82px;top:81px;width:45px;height:46px;background:#2cf0ea;border-radius:6px;box-shadow:0 0 0 1px #fff,1px 2px 3px #bbb;font-family:"Noto Sans CJK SC",sans-serif;font-weight:900;color:#222;overflow:hidden}
.qrlogo::after{content:"";position:absolute;left:3px;right:3px;top:12px;height:1px;background:#222}
.ql-small{position:absolute;right:8px;top:4px;font-size:7px;line-height:8px}
.ql-a{position:absolute;left:3px;top:11px;font-size:22px;line-height:26px}
.ql-b{position:absolute;right:9px;bottom:4px;font-size:16px;line-height:20px}
```
